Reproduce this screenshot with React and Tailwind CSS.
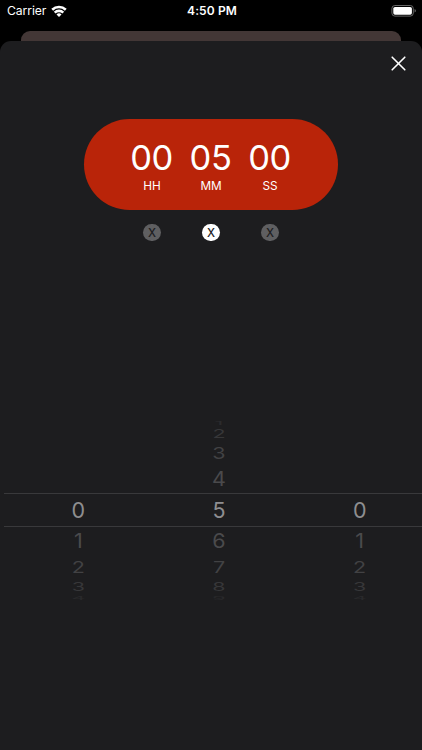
const units = [
  { value: '00', label: 'HH', active: false },
  { value: '05', label: 'MM', active: true },
  { value: '00', label: 'SS', active: false },
];

// how each wheel row is squashed and faded, by its place on the drum
const rowStyles = [
  { row: 'h-[7px]', text: 'scale-y-[0.2] text-[#2b2b2d]' },
  { row: 'h-[14px]', text: 'scale-y-[0.52] text-[#373739]' },
  { row: 'h-[25px]', text: 'scale-y-[0.77] text-[#424244]' },
  { row: 'h-[27.5px]', text: 'scale-y-[0.93] text-[#4a4a4c]' },
  { row: 'h-[34px]', text: 'text-[#8e8e90]' },
  { row: 'h-[27.5px]', text: 'scale-y-[0.93] text-[#4a4a4c]' },
  { row: 'h-[25px]', text: 'scale-y-[0.77] text-[#424244]' },
  { row: 'h-[14px]', text: 'scale-y-[0.52] text-[#373739]' },
  { row: 'h-[7px]', text: 'scale-y-[0.25] text-[#29292b]' },
];

function WifiIcon() {
  return (
    <svg viewBox="0 0 16 12" className="w-4 h-3" fill="none" stroke="white" strokeWidth="2.6">
      <path d="M1.2 4.7 A9.8 9.8 0 0 1 14.8 4.7" />
      <path d="M3.7 7.6 A6.2 6.2 0 0 1 12.3 7.6" />
      <path d="M8 12 L5.5 9.6 A3.5 3.5 0 0 1 10.5 9.6 Z" fill="white" stroke="none" />
    </svg>
  );
}

function BatteryIcon() {
  return (
    <svg viewBox="0 0 26 12" className="w-[26px] h-3">
      <rect x="0.9" y="0.5" width="21.4" height="10.6" rx="3" fill="none" stroke="#666" strokeWidth="1" />
      <rect x="2.3" y="1.9" width="18.6" height="7.8" rx="1.7" fill="white" />
      <path d="M23.6 4 C25.2 4.6 25.2 7 23.6 7.6 Z" fill="#777" />
    </svg>
  );
}

function StatusBar() {
  return (
    <div className="grid grid-cols-3 items-center h-[31px] pb-[9px] pl-[7px] pr-[5px] text-white">
      <div className="flex items-center gap-[4.5px]">
        <span className="text-[12.2px] leading-4 -tracking-[0.1px]">Carrier</span>
        <WifiIcon />
      </div>
      <span className="text-center text-[12px] leading-4 font-semibold tracking-[0.1px]">4:50 PM</span>
      <div className="flex justify-end">
        <BatteryIcon />
      </div>
    </div>
  );
}

function Wheel({ selected }) {
  return (
    <div className="flex flex-col">
      {rowStyles.map((s, i) => {
        const n = selected + i - 4;
        return (
          <div key={i} className={`flex items-center justify-center ${s.row}`}>
            {n >= 0 && <span className={`text-[21.5px] leading-none ${s.text}`}>{n}</span>}
          </div>
        );
      })}
    </div>
  );
}

export default function App() {
  return (
    <div className="w-full h-[750px] bg-black overflow-hidden flex flex-col font-['Inter',sans-serif]">
      <StatusBar />
      <div className="h-2.5 ml-[21px] mr-[21px] shrink-0 rounded-t-[9px] bg-[#433736]" />

      <div className="flex-1 rounded-t-[11px] bg-[#1d1d1f] overflow-hidden flex flex-col">
        <div className="flex justify-end pt-[15px] pr-4">
          <button aria-label="Close" className="block">
            <svg viewBox="0 0 15 15" className="block w-[15px] h-[15px]" stroke="white" strokeWidth="1.6" strokeLinecap="round">
              <path d="M1.2 1.2 L13.8 13.8 M13.8 1.2 L1.2 13.8" />
            </svg>
          </button>
        </div>

        <div className="mt-[47.5px] mx-auto w-[254.5px] h-[91.5px] shrink-0 rounded-full bg-[#b92409] text-white flex justify-center">
          {units.map(u => (
            <div key={u.label} className="w-[59px] pt-[21px] flex flex-col items-center">
              <span className="text-[34.5px] leading-[36px] -tracking-[0.4px] pr-px">{u.value}</span>
              <span className="mt-[2px] text-[11.8px] leading-4 -tracking-[0.1px]">{u.label}</span>
            </div>
          ))}
        </div>

        <div className="mt-[13.5px] flex justify-center">
          {units.map(u => (
            <div key={u.label} className="w-[59px] flex justify-center">
              <button className={`w-[17.5px] h-[17.5px] pt-[2px] rounded-full flex items-center justify-center text-[11.5px] leading-none font-medium text-[#1d1d1f] ${u.active ? 'bg-white' : 'bg-[#5f5f61]'}`}>
                X
              </button>
            </div>
          ))}
        </div>

        <div className="relative mt-[179.2px] h-[181px]">
          <div className="ml-2 w-[422px] grid grid-cols-3">
            <Wheel selected={0} />
            <Wheel selected={5} />
            <Wheel selected={0} />
          </div>
          <div className="absolute left-1 right-0 top-[72.8px] h-[34.5px] border-y border-[#39393b]" />
        </div>
      </div>
    </div>
  );
}
